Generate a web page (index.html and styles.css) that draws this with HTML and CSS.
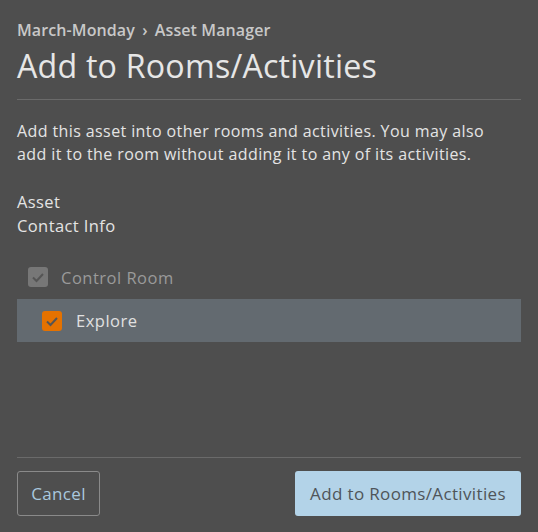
FILE: index.html
```html
<!DOCTYPE html>
<html>
<head>
<meta charset="utf-8">
<link rel="stylesheet" href="styles.css">
</head>
<body>
<div class="modal">
  <div class="header">
    <div class="crumbs">March-Monday <span class="sep">›</span> Asset Manager</div>
    <h1 class="title">Add to Rooms/Activities</h1>
  </div>
  <div class="body">
    <p class="desc">Add this asset into other rooms and activities. You may also add it to the room without adding it to any of its activities.</p>
    <div class="asset">
      <div>Asset</div>
      <div>Contact Info</div>
    </div>
    <div class="tree">
      <div class="row room">
        <span class="cb cb-disabled"><svg viewBox="0 0 20 20"><path d="M5 10.5l3.5 3.5 6.5-7" /></svg></span>
        <span class="label">Control Room</span>
      </div>
      <div class="row activity">
        <span class="cb cb-on"><svg viewBox="0 0 20 20"><path d="M5 10.5l3.5 3.5 6.5-7" /></svg></span>
        <span class="label">Explore</span>
      </div>
    </div>
  </div>
  <div class="footer">
    <button class="btn btn-outline">Cancel</button>
    <button class="btn btn-primary">Add to Rooms/Activities</button>
  </div>
</div>
</body>
</html>
```

FILE: styles.css
```css
html, body {
  margin: 0;
  padding: 0;
  background: #4e4e4e;
}
body {
  font-family: "Open Sans", "Noto Sans", sans-serif;
  color: #e0e0e0;
  width: 538px;
  height: 532px;
}
.modal {
  box-sizing: border-box;
  height: 532px;
  padding: 17px 17px 16px 17px;
  display: flex;
  flex-direction: column;
}
.header {
  border-bottom: 1px solid #6a6a6a;
  padding-bottom: 14px;
}
.crumbs {
  font-size: 16px;
  font-weight: 600;
  color: #c8c8c8;
  line-height: 26px;
  letter-spacing: 0.1px;
}
.sep {
  margin: 0 3px;
}
.title {
  margin: 4px 0 0 0;
  font-size: 32.2px;
  font-weight: 400;
  line-height: 38px;
  color: #e6e6e6;
  letter-spacing: 0.2px;
}
.body {
  flex: 1;
}
.desc {
  margin: 20px 0 0 0;
  max-width: 490px;
  font-size: 16px;
  line-height: 23px;
  color: #e4e4e4;
  letter-spacing: 0.4px;
}
.asset {
  margin-top: 24px;
  font-size: 16.5px;
  line-height: 24px;
  color: #e4e4e4;
  letter-spacing: 0.4px;
}
.tree {
  margin-top: 19px;
}
.row {
  display: flex;
  align-items: center;
}
.room {
  height: 44px;
  padding-left: 11px;
  margin-top: -2px;
}
.activity {
  height: 43px;
  padding-left: 25px;
  background: #636a70;
}
.cb {
  width: 20px;
  height: 20px;
  border-radius: 3px;
  display: inline-flex;
  margin-right: 13px;
}
.cb svg {
  width: 20px;
  height: 20px;
  fill: none;
  stroke: #555;
  stroke-width: 2;
}
.cb-disabled {
  background: #777;
}
.cb-on {
  background: #e57200;
}
.room .label {
  font-size: 16.5px;
  color: #9a9a9a;
  letter-spacing: 0.5px;
}
.activity .label {
  font-size: 16.5px;
  color: #e0e0e0;
  margin-left: 1px;
  letter-spacing: 0.5px;
}
.footer {
  border-top: 1px solid #6a6a6a;
  padding-top: 13px;
  display: flex;
  justify-content: space-between;
}
.btn {
  height: 45px;
  font-family: inherit;
  font-size: 17px;
  letter-spacing: 0.35px;
  border-radius: 3px;
  padding: 0 8px;
  cursor: pointer;
}
.btn-outline {
  background: transparent;
  border: 1px solid #8a8a8a;
  color: #a9c8de;
  width: 83px;
}
.btn-primary {
  background: #b3d3e8;
  border: none;
  color: #4f5559;
  width: 226px;
}
```
